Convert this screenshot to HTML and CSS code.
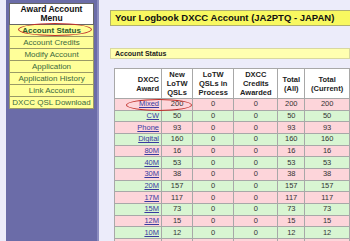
FILE: index.html
```html
<!DOCTYPE html>
<html lang="en">
<head>
    <meta charset="UTF-8">
    <title>Award Account - Account Status</title>
    <link rel="stylesheet" href="styles.css">
</head>
<body>
    <div class="sidebar">
        <table class="menu">
            <tr><th>Award Account<br>Menu</th></tr>
            <tr><td class="current"><a href="#">Account Status</a></td></tr>
            <tr><td><a href="#">Account Credits</a></td></tr>
            <tr><td><a href="#">Modify Account</a></td></tr>
            <tr><td><a href="#">Application</a></td></tr>
            <tr><td><a href="#">Application History</a></td></tr>
            <tr><td><a href="#">Link Account</a></td></tr>
            <tr><td><a href="#">DXCC QSL Download</a></td></tr>
        </table>
        <div class="circle menu-circle"></div>
    </div>

    <div class="main">
        <div class="title">Your Logbook DXCC Account (JA2PTQ - JAPAN)</div>

        <div class="section">Account Status</div>

        <div class="table-wrap">
            <table class="status">
                <tr>
                    <th class="award">DXCC<br>Award</th>
                    <th>New<br>LoTW<br>QSLs</th>
                    <th>LoTW<br>QSLs in<br>Process</th>
                    <th>DXCC<br>Credits<br>Awarded</th>
                    <th>Total<br>(All)</th>
                    <th>Total<br>(Current)</th>
                </tr>
                <tr class="pink"><td class="award"><a href="#">Mixed</a></td><td>200</td><td>0</td><td>0</td><td>200</td><td>200</td></tr>
                <tr class="green"><td class="award"><a href="#">CW</a></td><td>50</td><td>0</td><td>0</td><td>50</td><td>50</td></tr>
                <tr class="pink"><td class="award"><a href="#">Phone</a></td><td>93</td><td>0</td><td>0</td><td>93</td><td>93</td></tr>
                <tr class="green"><td class="award"><a href="#">Digital</a></td><td>160</td><td>0</td><td>0</td><td>160</td><td>160</td></tr>
                <tr class="pink"><td class="award"><a href="#">80M</a></td><td>16</td><td>0</td><td>0</td><td>16</td><td>16</td></tr>
                <tr class="green"><td class="award"><a href="#">40M</a></td><td>53</td><td>0</td><td>0</td><td>53</td><td>53</td></tr>
                <tr class="pink"><td class="award"><a href="#">30M</a></td><td>38</td><td>0</td><td>0</td><td>38</td><td>38</td></tr>
                <tr class="green"><td class="award"><a href="#">20M</a></td><td>157</td><td>0</td><td>0</td><td>157</td><td>157</td></tr>
                <tr class="pink"><td class="award"><a href="#">17M</a></td><td>117</td><td>0</td><td>0</td><td>117</td><td>117</td></tr>
                <tr class="green"><td class="award"><a href="#">15M</a></td><td>73</td><td>0</td><td>0</td><td>73</td><td>73</td></tr>
                <tr class="pink"><td class="award"><a href="#">12M</a></td><td>15</td><td>0</td><td>0</td><td>15</td><td>15</td></tr>
                <tr class="green"><td class="award"><a href="#">10M</a></td><td>12</td><td>0</td><td>0</td><td>12</td><td>12</td></tr>
                <tr class="pink"><td class="award"><a href="#">6M</a></td><td>5</td><td>0</td><td>0</td><td>5</td><td>5</td></tr>
            </table>
            <div class="circle table-circle"></div>
        </div>
    </div>
</body>
</html>
```

FILE: styles.css
```css
html, body {
    margin: 0;
    padding: 0;
    height: 100%;
    overflow: hidden;
}

body {
    background: #ececfa;
    font-family: 'Liberation Sans', Arial, sans-serif;
    display: flex;
    align-items: stretch;
}

.sidebar {
    position: relative;
    width: 85px;
    margin-left: 6px;
    padding: 3px 3px 0 3px;
    background: #6b6ca8;
    border-right: 2px solid #8c8dc0;
    flex-shrink: 0;
}

.menu {
    width: 85px;
    border-collapse: collapse;
    border: 1px solid #555;
}

.menu th {
    background: #fff;
    color: #111;
    font-size: 8.5px;
    line-height: 9px;
    font-weight: bold;
    padding: 1px 0;
    border: 1px solid #666;
}

.menu td {
    background: #ffff99;
    text-align: center;
    font-size: 8px;
    height: 11px;
    padding: 0;
    border: 1px solid #9a9a66;
}

.menu a {
    color: #3d6a3d;
    text-decoration: none;
}

.menu .current a {
    color: #2c5a2c;
    font-weight: bold;
}

.circle {
    position: absolute;
    border: 1.5px solid #c0302a;
    border-radius: 50%;
}

.menu-circle {
    left: 12px;
    top: 23px;
    width: 72px;
    height: 11px;
}

.main {
    margin-left: 11px;
    width: 240px;
    flex-shrink: 0;
}

.title {
    margin-top: 10px;
    margin-right: -14px;
    height: 14px;
    line-height: 14px;
    padding-left: 4px;
    background: #f8f860;
    border: 1px solid #b0b070;
    font-size: 9.5px;
    font-weight: bold;
    color: #111;
}

.section {
    margin-top: 22px;
    height: 9px;
    line-height: 9px;
    padding-left: 4px;
    background: #ffffb0;
    border: 1px solid #d8d8a0;
    font-size: 7px;
    font-weight: bold;
    color: #222;
}

.table-wrap {
    position: relative;
    margin: 9px 0 0 4px;
}

.status {
    width: 236px;
    border-collapse: collapse;
    font-size: 7.5px;
    color: #333;
    background: #fff;
}

.status th, .status td {
    border: 1px solid #a8a8a8;
    padding: 0 2px;
    text-align: center;
}

.status th {
    height: 29px;
    line-height: 9px;
    font-weight: bold;
    color: #222;
}

.status td {
    height: 10.67px;
    line-height: 10px;
}

.status .award {
    text-align: right;
    width: 42px;
}

.status a {
    color: #3a3aa0;
}

.status tr.pink td {
    background: #fdd5da;
}

.status tr.green td {
    background: #d8f5d2;
}

.table-circle {
    left: 12px;
    top: 31px;
    width: 64px;
    height: 10px;
}
```
